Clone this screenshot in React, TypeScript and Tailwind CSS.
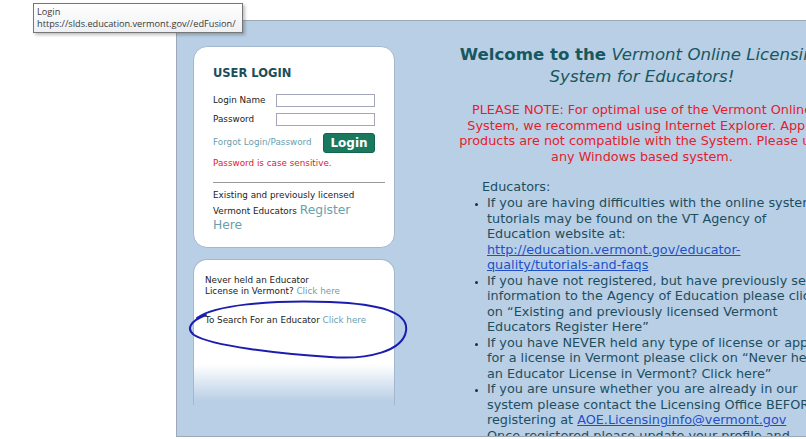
import React from 'react';

const PANEL = 'bg-[#b9cfe6]';

const LoginCard = () => (
  <div className="h-[202px] w-[202px] rounded-[14px] border border-[#a3b8cf] bg-white pl-[19px] pr-[19px] pt-[19px] text-[8.8px] text-[#222]">
    <div className="text-[11.5px] font-bold leading-[14px] text-[#1b4d5b]">USER LOGIN</div>
    <div className="mt-[14px] flex h-[13px] items-center">
      <span className="w-[63px] shrink-0">Login Name</span>
      <div className="h-[13px] w-[99px] border border-[#a2a6b8] bg-white" />
    </div>
    <div className="mt-[6px] flex h-[13px] items-center">
      <span className="w-[63px] shrink-0">Password</span>
      <div className="h-[13px] w-[99px] border border-[#a2a6b8] bg-white" />
    </div>
    <div className="mt-[7px] flex h-[20px] items-center justify-between">
      <span className="text-[#6a9fae]">Forgot Login/Password</span>
      <button className="flex h-[20px] w-[52px] items-center justify-center rounded-[3px] border border-[#12644d] bg-[#18795e] text-[12px] font-bold text-white">
        Login
      </button>
    </div>
    <div className="mt-[4px] leading-[12px] text-[#e0202e]">Password is case sensitive.</div>
    <div className="mr-[-10px] mt-[13px] h-px bg-[#9a9a9a]" />
    <div className="mt-[5px] leading-[14.5px]">
      Existing and previously licensed
      <br />
      Vermont Educators{' '}
      <span className="text-[12.3px] text-[#6a9fae]">
        Register
        <br />
        Here
      </span>
    </div>
  </div>
);

const InfoCard = () => (
  <div className="mt-[11px] h-[146px] w-[202px] rounded-t-[14px] border border-b-0 border-[#a3b8cf] bg-gradient-to-b from-white from-[72%] to-[#b9cfe6] to-[97%] pl-[11px] pt-[15px] text-[8.8px] leading-[11px] text-[#222]">
    <div>
      Never held an Educator
      <br />
      License in Vermont? <span className="text-[#6a9fae]">Click here</span>
    </div>
    <div className="mt-[18px]">
      To Search For an Educator <span className="text-[#6a9fae]">Click here</span>
    </div>
  </div>
);

const bullets: React.ReactNode[][] = [
  [
    'If you are having difficulties with the online system,',
    'tutorials may be found on the VT Agency of',
    'Education website at:',
    <a className="text-[#1f50c8] underline">http://education.vermont.gov/educator-</a>,
    <a className="text-[#1f50c8] underline">quality/tutorials-and-faqs</a>,
  ],
  [
    'If you have not registered, but have previously sent',
    'information to the Agency of Education please click',
    'on \u201cExisting and previously licensed Vermont',
    'Educators Register Here\u201d',
  ],
  [
    'If you have NEVER held any type of license or applied',
    'for a license in Vermont please click on \u201cNever held',
    'an Educator License in Vermont? Click here\u201d',
  ],
  [
    'If you are unsure whether you are already in our',
    'system please contact the Licensing Office BEFORE',
    <>
      registering at <a className="text-[#1f50c8] underline">AOE.Licensinginfo@vermont.gov</a>
    </>,
    'Once registered please update your profile and',
  ],
];

const Welcome = () => (
  <div className="ml-[60px] w-[374px] shrink-0 pt-[23px] text-[12.8px] leading-[15.5px]">
    <div className="whitespace-nowrap text-center text-[16.6px] leading-[22px] text-[#17585f]">
      <b>Welcome to the</b> <i>Vermont Online Licensing</i>
      <br />
      <i>System for Educators!</i>
    </div>
    <div className="mt-[14.4px] whitespace-nowrap text-center text-[#e5202c]">
      PLEASE NOTE: For optimal use of the Vermont Online
      <br />
      System, we recommend using Internet Explorer. Apple
      <br />
      products are not compatible with the System. Please use
      <br />
      any Windows based system.
    </div>
    <div className="mt-[14.6px] pl-[27px] text-[#1d4e5e]">Educators:</div>
    <ul className="mt-[0.7px] list-disc whitespace-nowrap pl-[32px] text-[#1d4e5e] marker:text-[9px] marker:text-[#1d2f3a]">
      {bullets.map((lines, i) => (
        <li key={i}>
          {lines.map((l, j) => (
            <React.Fragment key={j}>
              {j > 0 && <br />}
              {l}
            </React.Fragment>
          ))}
        </li>
      ))}
    </ul>
  </div>
);

export default function App() {
  return (
    <div className="relative h-[439px] w-[806px] overflow-hidden bg-white font-['DejaVu_Sans',sans-serif]">
      <div className="flex h-full">
        <div className="w-[176px] shrink-0" />
        <div className={`mt-[20px] flex h-[417px] flex-1 overflow-hidden border-b border-l border-t border-[#9ea8b6] ${PANEL}`}>
          <div className="w-[218px] shrink-0 pl-[16px] pt-[25px]">
            <LoginCard />
            <InfoCard />
          </div>
          <Welcome />
        </div>
      </div>

      {/* hand-drawn circle around the search link */}
      <svg className="pointer-events-none absolute left-0 top-0" width="806" height="439">
        <path
          d="M197 318 C215 305 268 300 330 302 C380 304 409 312 406 331 C403 351 368 360 330 357 C280 354 212 346 194 335 C186 329 190 321 206 315"
          fill="none"
          stroke="#1c1cb0"
          strokeWidth="2"
          strokeLinecap="round"
        />
      </svg>

      {/* browser tooltip */}
      <div className="absolute left-[33px] top-[3px] h-[30px] w-[210px] border border-[#767676] bg-gradient-to-b from-white to-[#eef0f4] px-[3px] pt-[2px] font-['Open_Sans',sans-serif] text-[9.2px] leading-[12px] text-[#3a3a3a] shadow-[2px_2px_3px_rgba(0,0,0,0.25)]">
        Login
        <br />
        https://slds.education.vermont.gov//edFusion/
      </div>
    </div>
  );
}
